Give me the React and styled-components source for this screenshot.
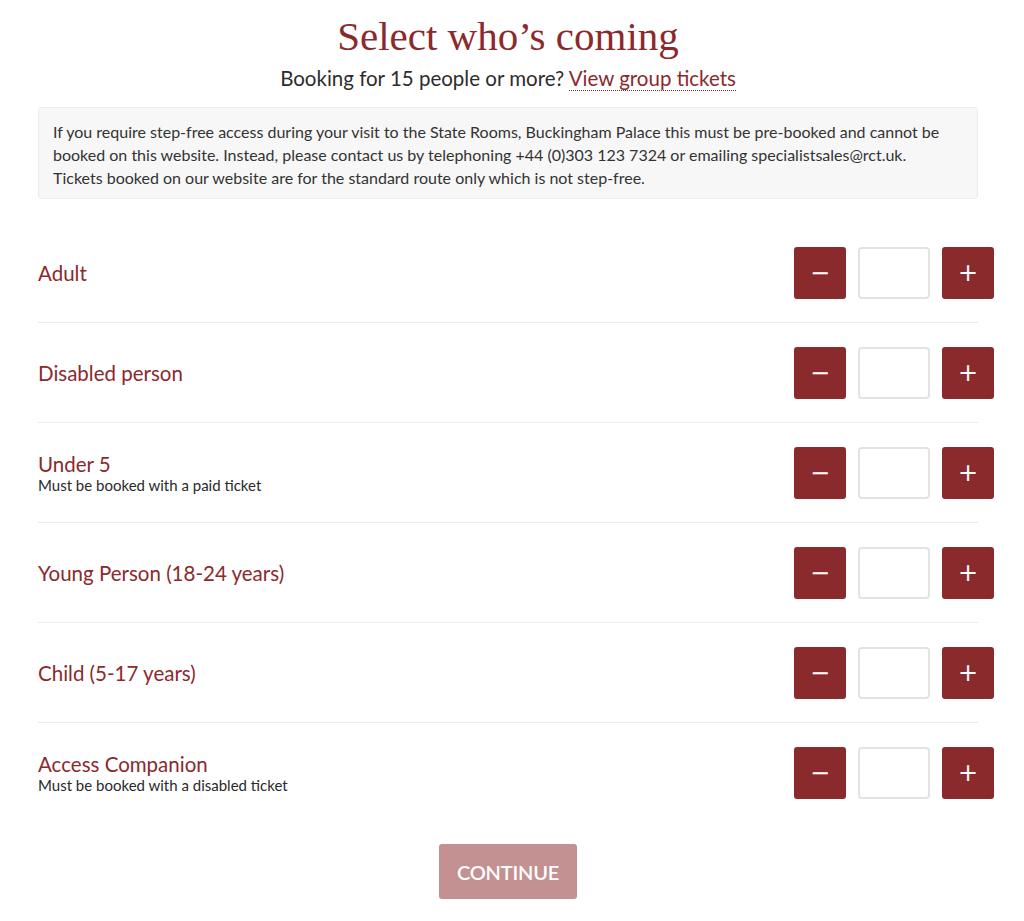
import React from "react";
import styled, { createGlobalStyle } from "styled-components";

const MAROON = "#8b2a2c";

const GlobalStyle = createGlobalStyle`
  body {
    margin: 0;
    background: #ffffff;
    font-family: "Lato", "Open Sans", sans-serif;
    color: #333333;
  }
`;

const tickets = [
  { name: "Adult" },
  { name: "Disabled person" },
  { name: "Under 5", note: "Must be booked with a paid ticket" },
  { name: "Young Person (18-24 years)" },
  { name: "Child (5-17 years)" },
  { name: "Access Companion", note: "Must be booked with a disabled ticket" },
];

const App = () => {
  return (
    <Page>
      <GlobalStyle />
      <Title>Select who’s coming</Title>
      <Subtitle>
        Booking for 15 people or more? <GroupLink href="#">View group tickets</GroupLink>
      </Subtitle>
      <InfoBox>
        If you require step-free access during your visit to the State Rooms, Buckingham Palace this must be pre-booked and cannot be
        <br />
        booked on this website. Instead, please contact us by telephoning +44 (0)303 123 7324 or emailing specialistsales@rct.uk.
        <br />
        Tickets booked on our website are for the standard route only which is not step-free.
      </InfoBox>
      <TicketList>
        {tickets.map((t) => (
          <TicketRow key={t.name}>
            <TicketInfo>
              <TicketName>{t.name}</TicketName>
              {t.note && <TicketNote>{t.note}</TicketNote>}
            </TicketInfo>
            <Counter>
              <StepButton aria-label={`Remove ${t.name}`}>−</StepButton>
              <CountInput type="text" />
              <StepButton aria-label={`Add ${t.name}`}>+</StepButton>
            </Counter>
          </TicketRow>
        ))}
      </TicketList>
      <Footer>
        <ContinueButton disabled>CONTINUE</ContinueButton>
      </Footer>
    </Page>
  );
};

const Page = styled.main`
  width: 940px;
  margin: 0 0 0 38px;
  padding: 12px 0 10px;
`;

const Title = styled.h1`
  margin: 0;
  text-align: center;
  font-family: "Liberation Serif", "DejaVu Serif", serif;
  font-weight: normal;
  font-size: 41px;
  line-height: 48px;
  color: ${MAROON};
`;

const Subtitle = styled.p`
  margin: 5px 0 0;
  text-align: center;
  font-size: 20.5px;
  line-height: 26px;
  color: #2d2d2d;
`;

const GroupLink = styled.a`
  color: ${MAROON};
  text-decoration: none;
  border-bottom: 1px dotted ${MAROON};
`;

const InfoBox = styled.div`
  margin-top: 16px;
  padding: 12px 14px 9px;
  background: #f7f7f7;
  border: 1px solid #ececec;
  border-radius: 3px;
  font-size: 16px;
  line-height: 23px;
  color: #333333;
  white-space: nowrap;
`;

const TicketList = styled.section`
  margin-top: 24px;
`;

const TicketRow = styled.div`
  display: flex;
  align-items: center;
  justify-content: space-between;
  height: 99px;
  border-bottom: 1px solid #ebebeb;

  &:last-child {
    border-bottom: none;
  }
`;

const TicketInfo = styled.div`
  display: flex;
  flex-direction: column;
`;

const TicketName = styled.span`
  font-size: 20.5px;
  line-height: 24px;
  color: ${MAROON};
`;

const TicketNote = styled.span`
  font-size: 15px;
  line-height: 18px;
  color: #2a2a2a;
`;

const Counter = styled.div`
  display: flex;
  gap: 12px;
  margin-right: -16px;
`;

const StepButton = styled.button`
  width: 52px;
  height: 52px;
  padding: 0;
  border: none;
  border-radius: 3px;
  background: ${MAROON};
  color: #ffffff;
  font-family: "DejaVu Sans", sans-serif;
  font-size: 24px;
  line-height: 1;
  cursor: pointer;
`;

const CountInput = styled.input`
  box-sizing: border-box;
  width: 72px;
  height: 52px;
  border: 2px solid #e3e3e3;
  border-radius: 4px;
  text-align: center;
  font-size: 18px;
`;

const Footer = styled.div`
  display: flex;
  justify-content: center;
  margin-top: 22px;
`;

const ContinueButton = styled.button`
  width: 138px;
  height: 55px;
  border: none;
  border-radius: 3px;
  background: #c49192;
  color: #ffffff;
  font-family: "Lato", sans-serif;
  font-size: 20px;
  font-weight: 600;
  letter-spacing: -0.2px;
`;

export default App;
